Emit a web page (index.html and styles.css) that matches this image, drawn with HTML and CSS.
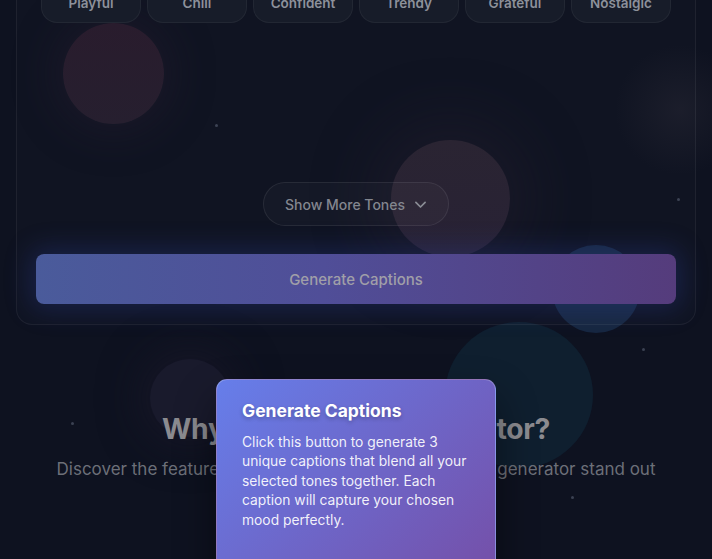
FILE: index.html
```html
<!DOCTYPE html>
<html lang="en">
<head>
<meta charset="utf-8">
<title>Caption Generator</title>
<link rel="stylesheet" href="styles.css">
</head>
<body>
<div class="bg" aria-hidden="true">
  <span class="orb orb-red1"></span>
  <span class="orb orb-red2"></span>
  <span class="orb orb-teal1"></span>
  <span class="orb orb-teal2"></span>
  <span class="orb orb-violet"></span>
  <span class="glow glow-right"></span>
  <span class="dot" style="left:215px;top:124px"></span>
  <span class="dot" style="left:677px;top:198px"></span>
  <span class="dot" style="left:642px;top:348px"></span>
  <span class="dot" style="left:71px;top:422px"></span>
  <span class="dot" style="left:571px;top:496px"></span>
</div>

<main class="page">
  <section class="card">
    <div class="tones">
      <button class="tone">Playful</button>
      <button class="tone">Chill</button>
      <button class="tone">Confident</button>
      <button class="tone">Trendy</button>
      <button class="tone">Grateful</button>
      <button class="tone">Nostalgic</button>
    </div>
    <div class="more-row">
      <button class="more">Show More Tones
        <svg class="chev" viewBox="0 0 24 24" width="17" height="17"><path d="M5.5 9l6.5 6.5L18.5 9" fill="none" stroke="currentColor" stroke-width="2.4" stroke-linecap="round" stroke-linejoin="round"/></svg>
      </button>
    </div>
    <button class="generate">Generate Captions</button>
  </section>

  <section class="why">
    <h2 class="why-title">Why Choose Our Generator?</h2>
    <p class="why-sub">Discover the features that make our Instagram caption generator stand out</p>
  </section>
</main>

<div class="tip" role="dialog">
  <h3 class="tip-title">Generate Captions</h3>
  <p class="tip-text">Click this button to generate 3 unique captions that blend all your selected tones together. Each caption will capture your chosen mood perfectly.</p>
  <div class="tip-actions"><button class="tip-btn">Got it</button></div>
</div>
</body>
</html>
```
FILE: styles.css
```css
* { box-sizing: border-box; }
html, body { margin: 0; height: 100%; }
body {
  background: #0e1220;
  font-family: Inter, "Noto Sans", sans-serif;
  overflow: hidden;
  position: relative;
}

.bg { position: absolute; inset: 0; pointer-events: none; overflow: hidden; }
.orb { position: absolute; border-radius: 50%; }
.orb-red1 {
  left: 63px; top: 23px; width: 101px; height: 101px;
  background: linear-gradient(180deg, #271a2b 0%, #241d2d 100%);
  box-shadow: 0 0 40px 10px rgba(40, 30, 50, 0.35);
}
.orb-red2 {
  left: 391px; top: 140px; width: 119px; height: 117px;
  background: linear-gradient(180deg, #282230 0%, #262033 100%);
  box-shadow: 0 0 60px 20px rgba(40, 32, 48, 0.35);
}
.orb-teal1 {
  left: 552px; top: 245px; width: 88px; height: 88px;
  background: #172740;
}
.orb-teal2 {
  left: 445px; top: 322px; width: 148px; height: 146px;
  background: #0f1f2f;
}
.orb-violet {
  left: 150px; top: 359px; width: 80px; height: 78px;
  background: #191a2c;
  box-shadow: 0 0 40px 10px rgba(30, 26, 44, 0.5);
}
.glow-right {
  position: absolute; left: 615px; top: 45px; width: 130px; height: 130px;
  border-radius: 50%;
  background: radial-gradient(closest-side, rgba(55, 52, 64, 0.28), rgba(40, 40, 50, 0));
}
.dot {
  position: absolute; width: 3px; height: 3px; border-radius: 50%;
  background: #3b4152;
}

.page { position: relative; padding: 0 16px; margin-top: -17px; }

.card {
  border: 1px solid rgba(255, 255, 255, 0.06);
  border-top: none;
  border-radius: 0 0 16px 16px;
  background: rgba(255, 255, 255, 0.012);
  padding: 0 19px 20px;
}

.tones {
  display: grid;
  grid-template-columns: repeat(6, 1fr);
  gap: 6px;
  margin: 0 5px;
}
.tone {
  height: 40px;
  border-radius: 16px;
  border: 1px solid rgba(255, 255, 255, 0.05);
  background: #171c29;
  color: #8d919b;
  font: 600 13.5px Inter, sans-serif;
  padding: 0 0 1px;
}

.more-row { display: flex; justify-content: center; margin-top: 159px; }
.more {
  display: flex; align-items: center; gap: 7px;
  height: 44px; width: 186px; justify-content: center;
  border-radius: 22px;
  border: 1px solid rgba(255, 255, 255, 0.08);
  background: rgba(255, 255, 255, 0.025);
  color: #83868f;
  font: 500 14px Inter, sans-serif;
  padding: 0 0 0 2px;
}
.chev { color: #8a8d95; }

.generate {
  display: block; width: 100%;
  margin-top: 28px;
  height: 50px;
  border: none;
  border-radius: 8px;
  background: linear-gradient(90deg, #4a5b9b 0%, #504e98 45%, #553c7c 100%);
  color: #a09fa8;
  font: 500 15px Inter, sans-serif;
  box-shadow: 0 0 26px 6px rgba(45, 70, 170, 0.28);
}

.why { text-align: center; padding-top: 87px; }
.why-title {
  margin: 0;
  font: 700 28.3px/34px Inter, sans-serif;
  color: #8b8b90;
  letter-spacing: -0.3px;
}
.why-sub {
  margin: 11px 0 0;
  font: 400 17px/24px Inter, sans-serif;
  color: #6c6f78;
}

.tip {
  position: absolute;
  left: 216px; top: 379px;
  width: 280px;
  padding: 20px 24px 24px 25px;
  border-radius: 11px;
  border: 1px solid rgba(255, 255, 255, 0.22);
  background: linear-gradient(135deg, #667eea 0%, #764ba2 100%);
  box-shadow: 0 20px 40px rgba(0, 0, 0, 0.45);
  color: #fff;
}
.tip-title {
  margin: 0;
  font: 700 17.5px/22px Inter, sans-serif;
  text-shadow: 0 2px 4px rgba(0, 0, 0, 0.25);
}
.tip-text {
  margin: 11px 0 0;
  font: 400 13.8px/19.4px Inter, sans-serif;
  color: rgba(255, 255, 255, 0.92);
}
.tip-actions { display: flex; justify-content: center; margin-top: 29px; }
.tip-btn {
  width: 86px; height: 34px;
  border-radius: 8px;
  border: 1px solid rgba(255, 255, 255, 0.35);
  background: rgba(255, 255, 255, 0.15);
  color: #fff;
  font: 600 13px Inter, sans-serif;
}
```
